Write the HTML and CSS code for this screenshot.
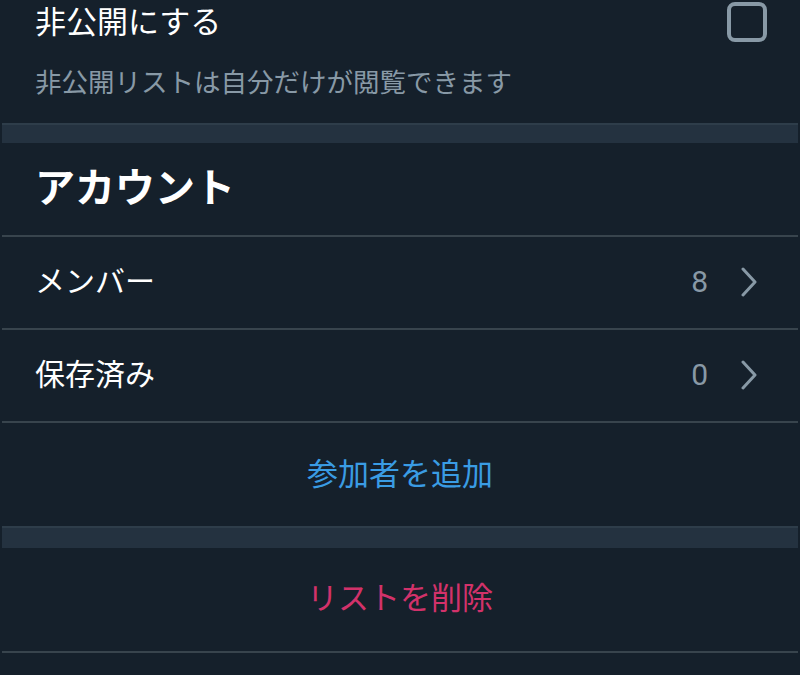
FILE: index.html
```html
<!DOCTYPE html>
<html lang="ja">
<head>
<meta charset="utf-8">
<link rel="stylesheet" href="styles.css">
</head>
<body>
<div class="page">
  <section class="privacy">
    <div class="privacy-row">
      <span class="label">非公開にする</span>
      <span class="checkbox"></span>
    </div>
    <p class="desc">非公開リストは自分だけが閲覧できます</p>
  </section>
  <div class="band"></div>
  <h2 class="section-title">アカウント</h2>
  <div class="row">
    <span class="label">メンバー</span>
    <span class="meta"><span class="count">8</span>
      <svg class="chev" width="18" height="30" viewBox="0 0 18 30"><path d="M3 2 L15 15 L3 28" fill="none" stroke="#8899a6" stroke-width="3" stroke-linecap="round" stroke-linejoin="round"/></svg>
    </span>
  </div>
  <div class="row">
    <span class="label">保存済み</span>
    <span class="meta"><span class="count">0</span>
      <svg class="chev" width="18" height="30" viewBox="0 0 18 30"><path d="M3 2 L15 15 L3 28" fill="none" stroke="#8899a6" stroke-width="3" stroke-linecap="round" stroke-linejoin="round"/></svg>
    </span>
  </div>
  <div class="action add">参加者を追加</div>
  <div class="band band-wide"></div>
  <div class="action delete">リストを削除</div>
</div>
</body>
</html>
```

FILE: styles.css
```css
html, body {
  margin: 0;
  padding: 0;
  background: #15202b;
}
body {
  font-family: Roboto, "Noto Sans CJK JP", sans-serif;
  color: #ffffff;
  width: 800px;
  height: 675px;
  overflow: hidden;
}
.page {
  display: flex;
  flex-direction: column;
}
.privacy {
  padding: 0 33px 0 35px;
}
.privacy-row {
  height: 44px;
  display: flex;
  align-items: center;
  justify-content: space-between;
}
.label {
  font-size: 30px;
  line-height: 1;
}
.privacy-row .label {
  font-size: 31px;
}
.checkbox {
  width: 32px;
  height: 32px;
  border: 4px solid #8899a6;
  border-radius: 8px;
}
.desc {
  margin: 0;
  height: 79px;
  padding-top: 24px;
  box-sizing: border-box;
  font-size: 26.5px;
  line-height: 30px;
  color: #8899a6;
}
.band {
  height: 18px;
  background: #243240;
  border-top: 2px solid #2e3d4a;
  margin: 0 2px;
}
.band-wide {
  height: 20px;
}
.section-title {
  margin: 0 2px;
  height: 94px;
  display: flex;
  align-items: center;
  padding: 0 35px 8px 33px;
  box-sizing: border-box;
  font-size: 40px;
  font-weight: 700;
  border-bottom: 2px solid #38444d;
}
.row {
  height: 93px;
  box-sizing: border-box;
  display: flex;
  align-items: center;
  justify-content: space-between;
  padding: 0 40px 2px 33px;
  margin: 0 2px;
  border-bottom: 2px solid #38444d;
}
.meta {
  display: flex;
  align-items: center;
  gap: 32px;
}
.count {
  font-size: 30px;
  color: #8899a6;
}
.chev {
  display: block;
}
.action {
  display: flex;
  align-items: center;
  justify-content: center;
  font-size: 31px;
  box-sizing: border-box;
  margin: 0 2px;
}
.add {
  height: 103px;
  padding-bottom: 6px;
  color: #3a9ce4;
}
.delete {
  height: 105px;
  padding-bottom: 9px;
  color: #d2326a;
  border-bottom: 2px solid #38444d;
}
```
